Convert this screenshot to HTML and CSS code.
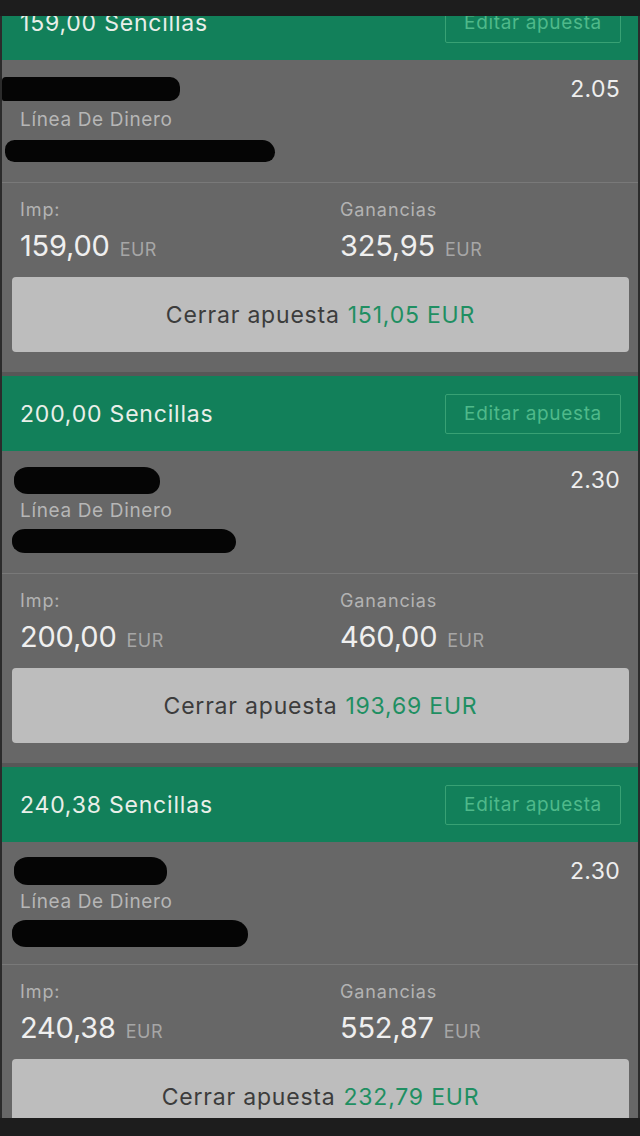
FILE: index.html
```html
<!DOCTYPE html>
<html lang="es">
<head>
<meta charset="utf-8">
<title>Apuestas</title>
<link rel="stylesheet" href="styles.css">
</head>
<body>
<div class="screen">
  <div class="viewport">
    <div class="list">

      <section class="card">
        <header class="card-head">
          <span class="title">159,00 Sencillas</span>
          <span class="edit">Editar apuesta</span>
        </header>
        <div class="info">
          <div class="row-top">
            <span class="blob blob-a1"></span>
            <span class="odds">2.05</span>
          </div>
          <div class="market">Línea De Dinero</div>
          <span class="blob blob-b1"></span>
        </div>
        <div class="stats">
          <div class="col">
            <div class="label">Imp:</div>
            <div class="value">159,00 <span class="cur">EUR</span></div>
          </div>
          <div class="col">
            <div class="label">Ganancias</div>
            <div class="value">325,95 <span class="cur">EUR</span></div>
          </div>
        </div>
        <div class="close-wrap">
          <div class="close">Cerrar apuesta <span class="amount">151,05 EUR</span></div>
        </div>
      </section>

      <section class="card">
        <header class="card-head">
          <span class="title">200,00 Sencillas</span>
          <span class="edit">Editar apuesta</span>
        </header>
        <div class="info">
          <div class="row-top">
            <span class="blob blob-a2"></span>
            <span class="odds">2.30</span>
          </div>
          <div class="market">Línea De Dinero</div>
          <span class="blob blob-b2"></span>
        </div>
        <div class="stats">
          <div class="col">
            <div class="label">Imp:</div>
            <div class="value">200,00 <span class="cur">EUR</span></div>
          </div>
          <div class="col">
            <div class="label">Ganancias</div>
            <div class="value">460,00 <span class="cur">EUR</span></div>
          </div>
        </div>
        <div class="close-wrap">
          <div class="close">Cerrar apuesta <span class="amount">193,69 EUR</span></div>
        </div>
      </section>

      <section class="card">
        <header class="card-head">
          <span class="title">240,38 Sencillas</span>
          <span class="edit">Editar apuesta</span>
        </header>
        <div class="info">
          <div class="row-top">
            <span class="blob blob-a3"></span>
            <span class="odds">2.30</span>
          </div>
          <div class="market">Línea De Dinero</div>
          <span class="blob blob-b3"></span>
        </div>
        <div class="stats">
          <div class="col">
            <div class="label">Imp:</div>
            <div class="value">240,38 <span class="cur">EUR</span></div>
          </div>
          <div class="col">
            <div class="label">Ganancias</div>
            <div class="value">552,87 <span class="cur">EUR</span></div>
          </div>
        </div>
        <div class="close-wrap">
          <div class="close">Cerrar apuesta <span class="amount">232,79 EUR</span></div>
        </div>
      </section>

    </div>
  </div>
</div>
</body>
</html>
```

FILE: styles.css
```css
* { box-sizing: border-box; }

html, body {
  margin: 0;
  padding: 0;
  background: #1d1d1d;
}

body {
  font-family: Inter, "Noto Sans", sans-serif;
  color: #ececec;
}

.screen {
  width: 640px;
  height: 1136px;
  padding: 16px 0 18px;
  background: #1d1d1d;
}

.viewport {
  height: 1102px;
  overflow: hidden;
  background: #676767;
  border-left: 2px solid #2b2b2b;
  border-right: 2px solid #2b2b2b;
}

.list {
  margin-top: -31px;
}

.card {
  background: #676767;
  border-bottom: 4px solid #575757;
}

.card-head {
  height: 75px;
  background: #12805a;
  display: flex;
  align-items: center;
  justify-content: space-between;
  padding: 0 17px 0 18px;
}

.title {
  font-size: 23px;
  color: #e9efe9;
  letter-spacing: 0.8px;
}

.edit {
  width: 176px;
  height: 40px;
  border: 1px solid #38a174;
  border-radius: 2px;
  display: flex;
  align-items: center;
  justify-content: center;
  font-size: 19px;
  letter-spacing: 0.65px;
  color: #4fb98a;
}

.info {
  height: 123px;
  padding: 14px 18px 0 0;
  border-bottom: 1px solid #797979;
  display: flex;
  flex-direction: column;
}

.row-top {
  height: 30px;
  display: flex;
  align-items: center;
  justify-content: space-between;
}

.odds {
  font-size: 23px;
  letter-spacing: 0.3px;
  color: #eeeeee;
}

.market {
  margin-top: 4px;
  height: 24px;
  line-height: 24px;
  padding-left: 18px;
  font-size: 19px;
  letter-spacing: 0.65px;
  color: #b6b6b6;
}

.blob {
  display: block;
  background: #050505;
  border-radius: 14px 16px 12px 14px / 12px 14px 12px 12px;
}

.blob-a1 { width: 178px; height: 24px; margin-left: 0; border-radius: 4px 10px 10px 2px; }
.blob-b1 { width: 270px; height: 22px; margin-top: 8px; margin-left: 3px; border-radius: 12px 16px 12px 12px; }
.blob-a2 { width: 146px; height: 27px; margin-left: 12px; }
.blob-b2 { width: 224px; height: 24px; margin-top: 6px; margin-left: 10px; }
.blob-a3 { width: 153px; height: 28px; margin-left: 12px; }
.blob-b3 { width: 236px; height: 27px; margin-top: 6px; margin-left: 10px; }

.stats {
  display: grid;
  grid-template-columns: 320px 1fr;
  padding-top: 16px;
}

.col {
  padding-left: 18px;
}

.label {
  height: 22px;
  line-height: 22px;
  font-size: 18px;
  letter-spacing: 0.9px;
  color: #b3b3b3;
}

.value {
  margin-top: 7px;
  height: 36px;
  line-height: 36px;
  font-size: 29px;
  color: #efefef;
  letter-spacing: -0.2px;
}

.cur {
  margin-left: 2px;
  font-size: 18px;
  color: #a6a6a6;
  letter-spacing: 0.5px;
}

.close-wrap {
  padding: 13px 9px 20px 10px;
}

.close {
  height: 75px;
  background: #bdbdbd;
  border-radius: 4px;
  display: flex;
  align-items: center;
  justify-content: center;
  font-size: 23px;
  letter-spacing: 0.8px;
  color: #3c3c3c;
}

.amount {
  margin-left: 8px;
  color: #1f8f62;
}
```
